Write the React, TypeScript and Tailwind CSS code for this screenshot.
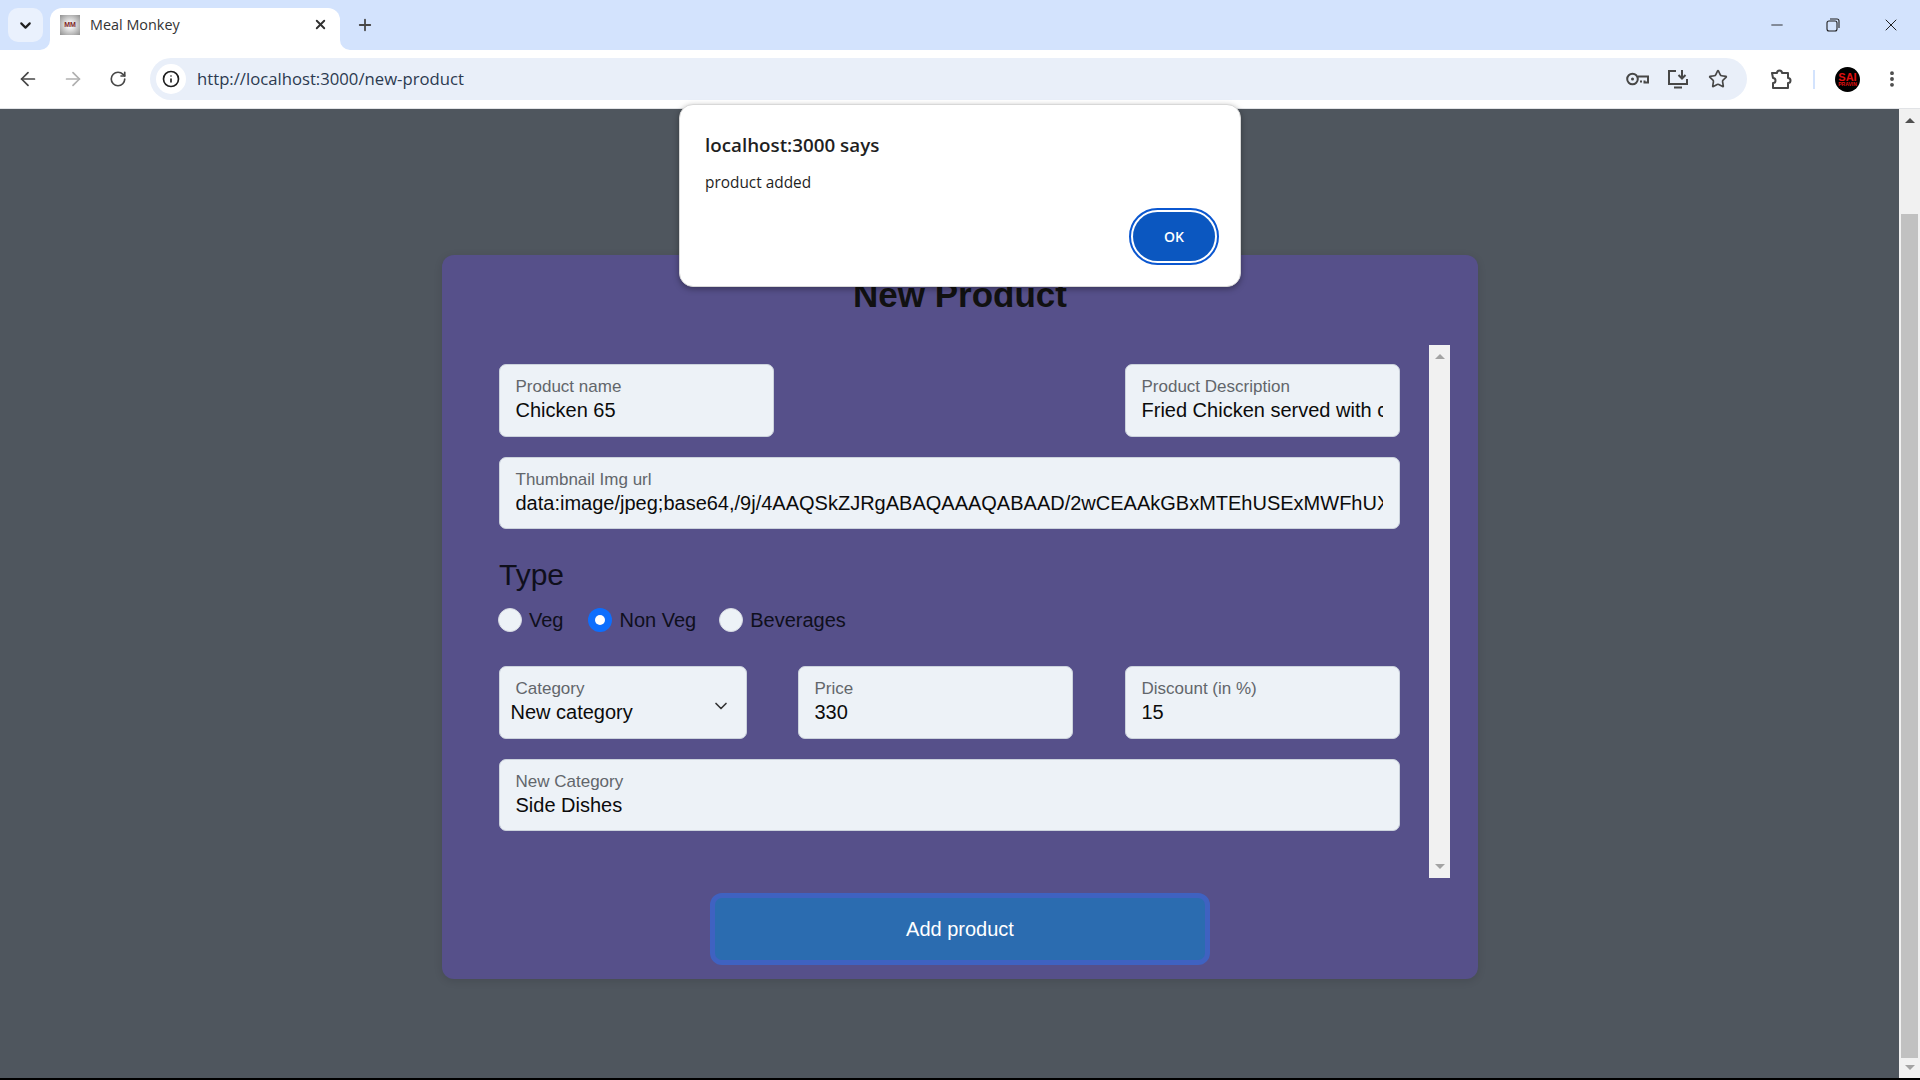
import { ChevronDown, X, Plus, ArrowLeft, ArrowRight, RotateCw, Info, Star, EllipsisVertical, Minus } from 'lucide-react';

const ARIAL = "font-['Liberation_Sans',Arial,sans-serif]";

function Field({ label, value, className }: { label: string; value: string; className: string }) {
	return (
		<label className={`flex flex-col rounded-[7px] border border-[#cbd2dc] bg-[#edf2f7] pl-[15.5px] pr-4 pt-[12px] ${className}`}>
			<span className="text-[17px] leading-[19px] text-[#62666b]">{label}</span>
			<input readOnly value={value} className="mt-[3px] w-full bg-transparent text-[20px] leading-[23px] text-[#0b0b0b] outline-none" />
		</label>
	);
}

function Radio({ label, checked, className }: { label: string; checked?: boolean; className?: string }) {
	return (
		<div className={`flex items-center gap-[7px] ${className ?? ''}`}>
			{checked ? (
				<span className="flex size-6 items-center justify-center rounded-full bg-[#0d6efd]">
					<span className="size-[10px] rounded-full bg-white" />
				</span>
			) : (
				<span className="size-6 rounded-full border border-[#d5d9e2] bg-[#edf2f7]" />
			)}
			<span className="text-[20px] leading-6 text-[#0f0f1c]">{label}</span>
		</div>
	);
}

function TabFlare({ right }: { right?: boolean }) {
	return (
		<svg width="10" height="10" viewBox="0 0 10 10" fill="#fff" className={`absolute top-[40px] ${right ? 'left-[340px]' : 'left-[40px]'}`}>
			<path d={right ? 'M0 0a10 10 0 0 0 10 10H0z' : 'M10 0a10 10 0 0 1-10 10h10z'} />
		</svg>
	);
}

function TabStrip() {
	return (
		<div className="relative flex h-[50px] items-start bg-[#d3e3fd] pl-2 pt-2">
			<div className="flex h-[34px] w-[35px] items-center justify-center rounded-[10px] bg-[#eaf1fd]">
				<ChevronDown size={17} strokeWidth={3} className="text-[#1f1f1f]" />
			</div>
			<div className="ml-[7px] flex h-[42px] w-[290px] items-center rounded-t-[12px] bg-white pb-[9px] pl-[10px] pr-[12px]">
				<div className="flex size-5 items-center justify-center bg-[radial-gradient(circle,#f2f2f2_20%,#8f8f8f_100%)] text-[7px] font-bold leading-none text-[#7c1f25]">MM</div>
				<span className="ml-[10px] flex-1 font-['Open_Sans',sans-serif] text-[14.4px] text-[#333]">Meal Monkey</span>
				<X size={15} strokeWidth={3} className="text-[#303030]" />
			</div>
			<TabFlare />
			<TabFlare right />
			<Plus size={18} strokeWidth={2.4} className="ml-4 mt-[8px] text-[#474747]" />
			<div className="ml-auto mr-[2px] mt-[7px] flex items-center text-[#1f1f1f]">
				<Minus size={18} strokeWidth={1.2} />
				<svg width="14" height="14" viewBox="0 0 14 14" fill="none" stroke="currentColor" strokeWidth="1.1" className="ml-[40px]">
					<rect x="1" y="3" width="10" height="10" rx="2" />
					<path d="M4 1h7a2 2 0 0 1 2 2v7" />
				</svg>
				<X size={20} strokeWidth={1.2} className="ml-[41px] mr-[17px]" />
			</div>
		</div>
	);
}

function Toolbar() {
	return (
		<div className="flex h-[59px] items-center rounded-t-[10px] border-b border-[#e1e3e6] bg-white pl-[5px]">
			<div className="flex w-[45px] justify-center"><ArrowLeft size={22} strokeWidth={1.9} className="text-[#474747]" /></div>
			<div className="flex w-[45px] justify-center"><ArrowRight size={22} strokeWidth={1.9} className="text-[#b0b0b0]" /></div>
			<div className="flex w-[45px] justify-center"><RotateCw size={18} strokeWidth={2.2} className="text-[#474747]" /></div>
			<div className="ml-[10px] flex h-[42px] w-[1597px] items-center rounded-full bg-[#e9eff9] pl-[6px] pr-[18px]">
				<div className="flex size-[30px] items-center justify-center rounded-full bg-white">
					<Info size={18} strokeWidth={2.2} className="text-[#1f1f1f]" />
				</div>
				<span className="ml-[11px] flex-1 font-['Open_Sans',sans-serif] text-[16.7px] text-[#2c3a50]">http://localhost:3000/new-product</span>
				<svg width="23" height="16" viewBox="0 0 23 16" fill="none" stroke="#474747" strokeWidth="2" className="mr-[18px]">
					<circle cx="6.500" cy="8" r="5.300" />
					<circle cx="6.500" cy="8" r="1.500" fill="#474747" stroke="none" />
					<path d="M12 5.500h10v6h-3.500v-2M15 11.500v-2" />
				</svg>
				<svg width="22" height="20" viewBox="0 0 22 20" fill="none" stroke="#474747" strokeWidth="2" className="mr-[19px]">
					<path d="M9 2H2v13h18v-5M7 18.500h8" />
					<path d="M15 1v8M11.500 6l3.500 3.500L18.500 6" />
				</svg>
				<Star size={20} strokeWidth={2} className="mr-[1px] text-[#474747]" />
			</div>
			<div className="ml-3 flex w-[44px] justify-center">
				<svg width="22" height="22" viewBox="0 0 22 22" fill="none" stroke="#474747" strokeWidth="2" strokeLinejoin="round">
					<path d="M2 5h5a2.500 2.500 0 0 1 5 0h6v5a2.500 2.500 0 0 1 0 5v5H3v-5a2.500 2.500 0 0 0 0-5z" />
				</svg>
			</div>
			<div className="ml-[10px] h-[19px] w-[2px] bg-[#d3e3fd]" />
			<div className="ml-5 flex size-[25px] flex-col items-center justify-center overflow-hidden rounded-full bg-black font-bold leading-none text-[#e01010]">
				<span className="text-[11px] leading-[10px]">SAI</span>
				<span className="text-[5px] leading-[5px]">PRAVIN</span>
			</div>
			<div className="ml-[22px] flex w-5 justify-center"><EllipsisVertical size={20} strokeWidth={2.6} className="text-[#474747]" /></div>
		</div>
	);
}

function ScrollArrow({ down, color }: { down?: boolean; color: string }) {
	return (
		<svg width="10" height="5" viewBox="0 0 10 5" fill={color}>
			<path d={down ? 'M0 0h10L5 5z' : 'M5 0l5 5H0z'} />
		</svg>
	);
}

function AlertDialog() {
	return (
		<div className="absolute left-[679px] top-[104px] z-10 flex h-[183px] w-[562px] flex-col rounded-[14px] border border-[#d8d8d8] bg-white pl-[25px] pr-[21px] pt-[27px] font-['Open_Sans',sans-serif] shadow-[0_2px_6px_rgba(0,0,0,0.35)]">
			<div className="text-[18.8px] font-semibold leading-[26px] text-[#1f1f1f]">localhost:3000 says</div>
			<div className="mt-[15px] text-[15.4px] leading-5 text-[#1f1f1f]">product added</div>
			<div className="mt-[15px] flex justify-end">
				<div className="flex h-[57px] w-[90px] items-center justify-center rounded-full border-2 border-[#0b57d0] p-[2px]">
					<div className="flex size-full items-center justify-center rounded-full bg-[#0b57c0] text-[14px] font-semibold text-white">OK</div>
				</div>
			</div>
		</div>
	);
}

export default function App() {
	return (
		<div className={`relative flex h-screen w-full flex-col overflow-hidden ${ARIAL}`}>
			<TabStrip />
			<Toolbar />
			<AlertDialog />
			<div className="flex min-h-0 flex-1 border-b-2 border-black bg-[#4f565e]">
				<div className="flex-1 pl-[442px] pt-[146px]">
					<div className="h-[724px] w-[1036px] rounded-[12px] bg-[#56508a] shadow-[0_2px_8px_rgba(0,0,0,0.12)]">
						<h1 className="pt-[21px] text-center text-[35px] font-bold leading-[37px] text-[#111]">New Product</h1>
						<div className="mt-[32px] flex h-[533px]">
							<div className="w-[987px] pl-[57px] pr-[29px] pt-[19px]">
								<div className="flex justify-between">
									<Field label="Product name" value="Chicken 65" className="h-[73px] w-[275px]" />
									<Field label="Product Description" value="Fried Chicken served with chutney and onions" className="h-[73px] w-[275px]" />
								</div>
								<Field label="Thumbnail Img url" value="data:image/jpeg;base64,/9j/4AAQSkZJRgABAQAAAQABAAD/2wCEAAkGBxMTEhUSExMWFhUXGBgYGBcYFxgYFxgXFxUXFxgXGBgYHSggGBolHRUVITEhJSkrLi4u" className="mt-5 h-[72px] w-full" />
								<div className="mt-[30px] text-[30px] leading-[32px] text-[#0f0f1c]">Type</div>
								<div className="-ml-px mt-[17px] flex gap-[25px]">
									<Radio label="Veg" />
									<Radio label="Non Veg" checked />
									<Radio label="Beverages" className="-ml-[2px]" />
								</div>
								<div className="mt-[34px] flex">
									<div className="relative flex h-[73px] w-[248px] flex-col rounded-[7px] border border-[#cbd2dc] bg-[#edf2f7] pl-[10.5px] pt-[12px]">
										<span className="pl-[5px] text-[17px] leading-[19px] text-[#62666b]">Category</span>
										<span className="mt-[3px] text-[20px] leading-[23px] text-[#0b0b0b]">New category</span>
										<ChevronDown size={20} strokeWidth={2} className="absolute right-[15px] top-[29px] text-[#333]" />
									</div>
									<Field label="Price" value="330" className="ml-[51px] h-[73px] w-[275px]" />
									<Field label="Discount (in %)" value="15" className="ml-auto h-[73px] w-[275px]" />
								</div>
								<Field label="New Category" value="Side Dishes" className="mt-5 h-[72px] w-full" />
							</div>
							<div className="flex w-[21px] flex-col items-center justify-between bg-[#f1f1f1] pb-[9px] pt-[9px]">
								<ScrollArrow color="#a3a3a3" />
								<ScrollArrow down color="#a3a3a3" />
							</div>
						</div>
						<button className="mx-auto mt-[15px] block h-[72px] w-[500px] rounded-[12px] border-[5px] border-[#3f62c1] bg-[#2b6cb0] text-[20px] text-white">Add product</button>
					</div>
				</div>
				<div className="flex w-[21px] flex-col items-center bg-[#f1f1f1] pt-[9px]">
					<ScrollArrow color="#505050" />
					<div className="mt-[91px] h-[844px] w-[17px] bg-[#c1c1c1]" />
					<div className="mt-[7px]"><ScrollArrow down color="#a3a3a3" /></div>
				</div>
			</div>
		</div>
	);
}
